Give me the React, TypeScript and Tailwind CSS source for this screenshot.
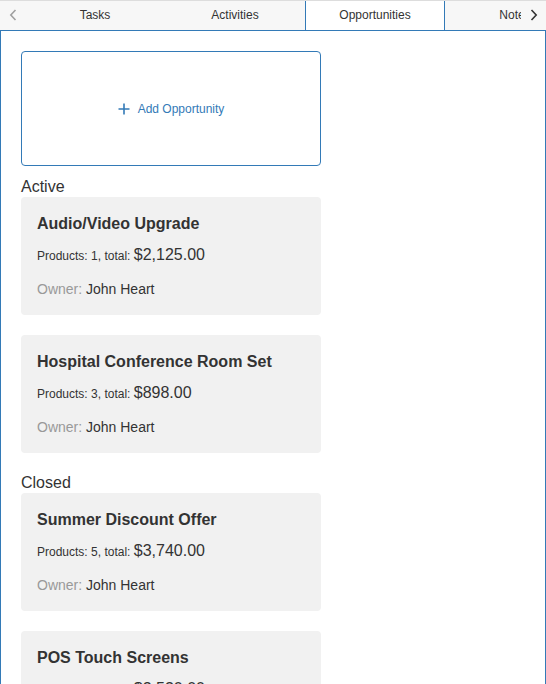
import React from "react";

const BLUE = "#337ab7";

type Opp = { title: string; count: number; total: string };

const active: Opp[] = [
  { title: "Audio/Video Upgrade", count: 1, total: "$2,125.00" },
  { title: "Hospital Conference Room Set", count: 3, total: "$898.00" },
];
const closed: Opp[] = [
  { title: "Summer Discount Offer", count: 5, total: "$3,740.00" },
  { title: "POS Touch Screens", count: 4, total: "$2,520.00" },
];

function Card({ o }: { o: Opp }) {
  return (
    <div className="w-[300px] rounded-[4px] bg-[#f1f1f1] px-4 pt-4 pb-4 mb-5">
      <div className="h-[22px] text-[16px] font-bold leading-[22px] text-[#333]">{o.title}</div>
      <div className="mt-[10px] h-5 flex items-baseline text-[#333] leading-5 whitespace-pre">
        <span className="text-[12px] leading-5">Products: {o.count}, total: </span>
        <span className="text-[16px] leading-5">{o.total}</span>
      </div>
      <div className="mt-[14px] h-5 text-[14px] leading-5">
        <span className="text-[#999]">Owner: </span>
        <span className="text-[#333]">John Heart</span>
      </div>
    </div>
  );
}

export default function App() {
  const tabs = ["Tasks", "Activities", "Opportunities", "Notes"];
  return (
    <div
      className="w-[546px] h-[684px] overflow-hidden bg-white flex flex-col"
      style={{ fontFamily: '"Liberation Sans", Arial, sans-serif' }}
    >
      <div className="relative h-[31px] shrink-0 bg-[#f7f7f7] border-t border-[#ddd] border-b border-b-[#337ab7] flex">
        <div className="w-[25px] h-[28px] shrink-0 flex items-center justify-center">
          <svg width="8" height="12" viewBox="0 0 8 12" fill="none">
            <path d="M6.5 1 L1.8 6 L6.5 11" stroke="#a0a0a0" strokeWidth="1.6" />
          </svg>
        </div>
        <div className="flex-1 overflow-hidden flex">
          {tabs.map((t) => {
            const isActive = t === "Opportunities";
            return (
              <div
                key={t}
                className={
                  isActive
                    ? "w-[140px] shrink-0 h-[31px] -mt-px pb-[2px] bg-white border border-b-0 border-[#337ab7] flex items-center justify-center text-[12px] text-[#333] relative z-10"
                    : "w-[140px] shrink-0 h-[28px] flex items-center justify-center text-[12px] text-[#333]"
                }
              >
                {t}
              </div>
            );
          })}
        </div>
        <div className="absolute right-0 top-0 h-[28px] w-[25px] bg-[#f7f7f7] flex items-center justify-center z-20">
          <svg width="8" height="12" viewBox="0 0 8 12" fill="none">
            <path d="M1.5 1 L6.2 6 L1.5 11" stroke="#333" strokeWidth="1.6" />
          </svg>
        </div>
      </div>
      <div className="flex-1 border-l border-r border-[#337ab7] px-5 pt-5">
        <div
          className="w-[300px] h-[115px] rounded-[4px] border flex items-center justify-center gap-[8px] text-[12px] mb-[11px]"
          style={{ borderColor: BLUE, color: BLUE }}
        >
          <svg width="12" height="12" viewBox="0 0 12 12">
            <path d="M6 0.5 V11.5 M0.5 6 H11.5" stroke={BLUE} strokeWidth="1.6" />
          </svg>
          <span>Add Opportunity</span>
        </div>
        <div className="text-[16px] leading-5 text-[#333]">Active</div>
        {active.map((o) => (
          <Card key={o.title} o={o} />
        ))}
        <div className="text-[16px] leading-5 text-[#333]">Closed</div>
        {closed.map((o) => (
          <Card key={o.title} o={o} />
        ))}
      </div>
    </div>
  );
}
